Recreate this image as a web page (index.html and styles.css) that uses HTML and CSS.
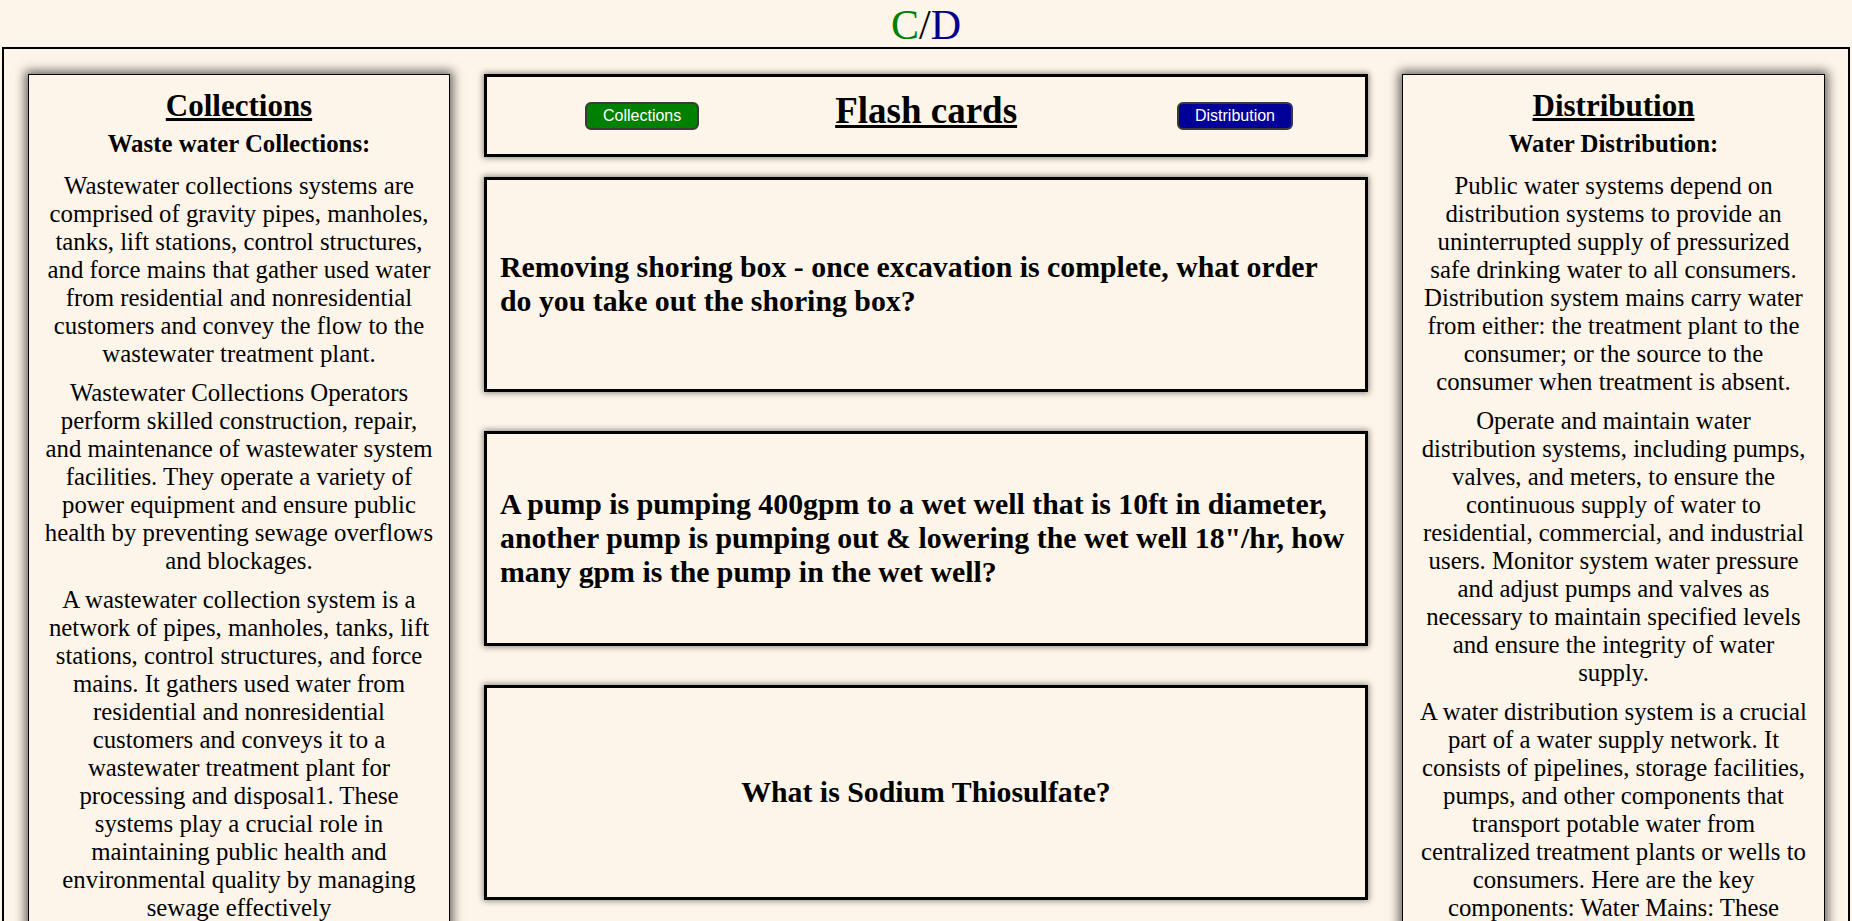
FILE: index.html
```html
<!DOCTYPE html>
<html lang="en">
<head>
<meta charset="utf-8">
<title>C/D Flash cards</title>
<link rel="stylesheet" href="styles.css">
</head>
<body>
<div class="site-title"><span class="c">C</span>/<span class="d">D</span></div>
<main class="frame">
  <section class="panel">
    <h2 class="panel-title">Collections</h2>
    <h3 class="panel-sub">Waste water Collections:</h3>
    <p>Wastewater collections systems are comprised of gravity pipes, manholes, tanks, lift stations, control structures, and force mains that gather used water from residential and nonresidential customers and convey the flow to the wastewater treatment plant.</p>
    <p>Wastewater Collections Operators perform skilled construction, repair, and maintenance of wastewater system facilities. They operate a variety of power equipment and ensure public health by preventing sewage overflows and blockages.</p>
    <p>A wastewater collection system is a network of pipes, manholes, tanks, lift stations, control structures, and force mains. It gathers used water from residential and nonresidential customers and conveys it to a wastewater treatment plant for processing and disposal1. These systems play a crucial role in maintaining public health and environmental quality by managing sewage effectively</p>
  </section>

  <section class="center">
    <div class="head-card">
      <button class="btn btn-green">Collections</button>
      <h1 class="flash-title">Flash cards</h1>
      <button class="btn btn-blue">Distribution</button>
    </div>
    <div class="card"><div class="q">Removing shoring box - once excavation is complete, what order do you take out the shoring box?</div></div>
    <div class="card"><div class="q">A pump is pumping 400gpm to a wet well that is 10ft in diameter, another pump is pumping out &amp; lowering the wet well 18"/hr, how many gpm is the pump in the wet well?</div></div>
    <div class="card"><div class="q">What is Sodium Thiosulfate?</div></div>
  </section>

  <section class="panel">
    <h2 class="panel-title">Distribution</h2>
    <h3 class="panel-sub">Water Distribution:</h3>
    <p>Public water systems depend on distribution systems to provide an uninterrupted supply of pressurized safe drinking water to all consumers. Distribution system mains carry water from either: the treatment plant to the consumer; or the source to the consumer when treatment is absent.</p>
    <p>Operate and maintain water distribution systems, including pumps, valves, and meters, to ensure the continuous supply of water to residential, commercial, and industrial users. Monitor system water pressure and adjust pumps and valves as necessary to maintain specified levels and ensure the integrity of water supply.</p>
    <p>A water distribution system is a crucial part of a water supply network. It consists of pipelines, storage facilities, pumps, and other components that transport potable water from centralized treatment plants or wells to consumers. Here are the key components: Water Mains: These underground pipes carry water throughout the distribution network.</p>
  </section>
</main>
</body>
</html>
```

FILE: styles.css
```css
html, body {
  margin: 0;
  padding: 0;
  background: #fdf5e9;
  font-family: "Liberation Serif", "Times New Roman", serif;
  color: #000;
}

.site-title {
  text-align: center;
  font-size: 42px;
  line-height: 44px;
  height: 44px;
  padding-top: 3px;
}
.site-title .c { color: #008000; }
.site-title .d { color: #00008b; }

.frame {
  margin: 0 2px;
  border: 2px solid #000;
  padding: 25px 23px 25px 24px;
  display: grid;
  grid-template-columns: 422px 884px 1fr;
  column-gap: 34px;
  align-items: start;
}

.panel {
  background: #fdf5e9;
  border: 1px solid #000;
  box-shadow: 0 0 10px 3px rgba(0, 0, 0, 0.6);
  padding: 13px 14px 20px;
  text-align: center;
}

.panel-title {
  margin: 0;
  font-size: 31px;
  font-weight: bold;
  text-decoration: underline;
}

.panel-sub {
  margin: 5.5px 0 0;
  font-size: 24.8px;
  font-weight: bold;
}

.panel p {
  margin: 11px 0 0;
  font-size: 24.8px;
}
.panel-sub + p { margin-top: 14px; }

.center {
  display: flex;
  flex-direction: column;
}

.head-card {
  box-sizing: border-box;
  height: 83px;
  border: 3px solid #000;
  box-shadow: 0 0 6px 1px rgba(0, 0, 0, 0.45);
  display: flex;
  align-items: center;
  justify-content: space-between;
  padding: 0 72px 0 98px;
}

.flash-title {
  margin: 0 24px 10px 0;
  font-size: 37px;
  font-weight: bold;
  text-decoration: underline;
}

.btn {
  font-family: "Liberation Sans", Arial, sans-serif;
  font-size: 16px;
  color: #fff;
  border: 2px solid #3a3a3a;
  border-radius: 6px;
  padding: 3px 16px;
  line-height: 18px;
}
.btn-green { background: #008000; }
.btn-blue { background: #000099; }

.card {
  box-sizing: border-box;
  height: 215px;
  margin: 19.5px 0;
  border: 3px solid #000;
  box-shadow: 0 0 6px 1px rgba(0, 0, 0, 0.45);
  padding: 0 13px;
  display: flex;
  align-items: center;
  justify-content: center;
}

.q {
  font-size: 29.8px;
  font-weight: bold;
}
```
